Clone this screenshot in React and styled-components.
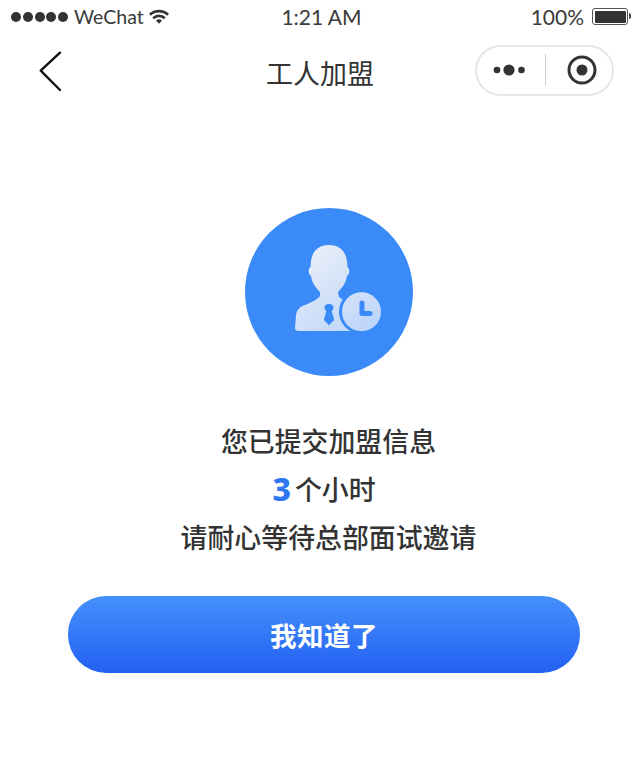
import React from 'react';
import styled, { createGlobalStyle } from 'styled-components';

const GlobalStyle = createGlobalStyle`
  html, body {
    margin: 0;
    padding: 0;
    background: #fff;
  }
  * {
    box-sizing: border-box;
  }
`;

const Page = styled.div`
  width: 640px;
  height: 765px;
  background: #fff;
  color: #333;
  font-family: "Noto Sans CJK SC", "Noto Sans", sans-serif;
  overflow: hidden;
`;

const StatusBar = styled.div`
  height: 33px;
  padding: 0 12px 0 11px;
  display: grid;
  grid-template-columns: 1fr auto 1fr;
  align-items: center;
  font-family: "Lato", "Open Sans", sans-serif;
  font-size: 21px;
  color: #3a3a3a;
`;

const StatusLeft = styled.div`
  display: flex;
  align-items: center;
`;

const Signal = styled.div`
  display: flex;
  gap: 1.75px;
  margin-right: 6px;
`;

const SignalDot = styled.span`
  width: 10px;
  height: 10px;
  border-radius: 50%;
  background: #333;
`;

const Carrier = styled.span`
  font-size: 19.5px;
`;

const Time = styled.div`
  margin-left: 4px;
`;

const StatusRight = styled.div`
  display: flex;
  align-items: center;
  justify-content: flex-end;
  gap: 8px;
`;

const Battery = styled.div`
  width: 36px;
  height: 17px;
  border: 1px solid #555;
  border-radius: 3px;
  padding: 1.5px;
  position: relative;

  &::before {
    content: '';
    display: block;
    height: 100%;
    background: #333;
    border-radius: 1px;
  }

  &::after {
    content: '';
    position: absolute;
    right: -4px;
    top: 4px;
    width: 2px;
    height: 6px;
    background: #444;
    border-radius: 0 2px 2px 0;
  }
`;

const NavBar = styled.div`
  height: 74px;
  padding: 0 26px;
  display: grid;
  grid-template-columns: 1fr auto 1fr;
  align-items: center;
`;

const BackButton = styled.div`
  margin: 2px 0 0 13px;
`;

const Title = styled.div`
  margin-top: 4px;
  font-size: 27px;
  font-weight: 400;
  color: #333;
`;

const Capsule = styled.div`
  justify-self: end;
  width: 139px;
  height: 51px;
  border: 2px solid #e6e6e6;
  border-radius: 26px;
  display: flex;
  align-items: center;
  justify-content: space-between;
  padding: 0 15.5px 0 15px;
`;

const CapsuleDivider = styled.span`
  width: 1.5px;
  height: 32px;
  margin-right: 2px;
  background: #ccc;
`;

const Main = styled.main`
  display: flex;
  flex-direction: column;
  align-items: center;
  padding: 101px 0 0 8px;
`;

const Avatar = styled.div`
  width: 168px;
  height: 168px;
  margin-left: 10px;
  border-radius: 50%;
  background: #3a8bf8;
  display: flex;
  align-items: center;
  justify-content: center;
`;

const Message = styled.div`
  margin-top: 43px;
  display: flex;
  flex-direction: column;
  align-items: center;
  gap: 5px;
`;

const Line = styled.div`
  height: 43px;
  margin-left: ${props => (props.$shifted ? '9px' : '0')};
  font-size: 26.9px;
  font-weight: 500;
  color: #333;
  display: flex;
  align-items: center;
`;

const Count = styled.span`
  font-family: "Noto Sans", sans-serif;
  font-size: 32px;
  font-weight: 800;
  color: #2f76f0;
  margin-right: 4px;
`;

const ConfirmButton = styled.button`
  margin-top: 38px;
  width: 512px;
  height: 77px;
  border: none;
  border-radius: 38px;
  background: linear-gradient(180deg, #4590fb 0%, #2360f3 100%);
  color: #fff;
  font-family: inherit;
  font-size: 26.5px;
  font-weight: 700;
  letter-spacing: 0.5px;
`;

const WifiIcon = () => (
  <svg width="20" height="16" viewBox="0 0 22 17" style={{ marginLeft: 5 }}>
    <path d="M1 6a14.500 14.500 0 0 1 20 0" fill="none" stroke="#333" strokeWidth="3" />
    <path d="M4.600 9.800a9.300 9.300 0 0 1 12.800 0" fill="none" stroke="#333" strokeWidth="3" />
    <path d="M7.700 12.400a5 5 0 0 1 6.600 0L11 16z" fill="#333" />
  </svg>
);

const BackIcon = () => (
  <svg width="24" height="42" viewBox="0 0 24 42" style={{ display: 'block' }}>
    <path d="M21 2.700 1.700 20.700 21 40" fill="none" stroke="#111" strokeWidth="2.400" strokeLinecap="round" strokeLinejoin="round" />
  </svg>
);

const MoreIcon = () => (
  <svg width="34" height="14" viewBox="0 0 34 14">
    <circle cx="5" cy="7" r="3.300" fill="#333" />
    <circle cx="17" cy="7" r="5.600" fill="#333" />
    <circle cx="29.500" cy="7" r="3.300" fill="#333" />
  </svg>
);

const RecordIcon = () => (
  <svg width="30" height="30" viewBox="0 0 30 30">
    <circle cx="15" cy="15" r="13" fill="none" stroke="#333" strokeWidth="3" />
    <circle cx="15" cy="15" r="5.500" fill="#333" />
  </svg>
);

const WorkerIcon = () => (
  <svg width="88" height="88" viewBox="0 0 88 88" style={{ marginLeft: 18, marginBottom: 6 }}>
    <defs>
      <linearGradient id="workerFill" x1="0.25" y1="0" x2="0.75" y2="1">
        <stop offset="0" stopColor="#eaeff8" />
        <stop offset="1" stopColor="#c3d9f9" />
      </linearGradient>
      <linearGradient id="clockFill" x1="0.2" y1="0" x2="0.8" y2="1">
        <stop offset="0" stopColor="#d3e2f8" />
        <stop offset="1" stopColor="#b9d3f9" />
      </linearGradient>
    </defs>
    <path
      d="M35 0C24 0 18 7 17 16L16.500 22C14 24 14 29 17 31C18 38 22 43 26 47L26 51C24 54 18 57 11 60C5 62 3 65 2 70L1 83C1 85 2 86 5 86H62V60C57 58 48 55 45 52L44 47C48 43 52 38 53 31C56 29 56 24 53.500 22L53 16C52 7 46 0 35 0z"
      fill="url(#workerFill)"
    />
    <path d="M35 59c3 0 4.500 1.600 4.500 3.600 0 1.500-.8 2.600-1.700 3.600l2.400 8.800-5.200 5.200-5.200-5.200 2.400-8.800c-.9-1-1.700-2.100-1.700-3.600 0-2 1.500-3.600 4.500-3.600z" fill="#3a8bf8" />
    <circle cx="67.500" cy="66.700" r="22.500" fill="#3a8bf8" />
    <circle cx="67.500" cy="66.700" r="19.500" fill="url(#clockFill)" />
    <path d="M68 58v10.500h8" fill="none" stroke="#3a8bf8" strokeWidth="5" strokeLinecap="round" strokeLinejoin="round" />
  </svg>
);

const App = () => (
  <Page>
    <GlobalStyle />
    <StatusBar>
      <StatusLeft>
        <Signal>
          {[0, 1, 2, 3, 4].map(i => (
            <SignalDot key={i} />
          ))}
        </Signal>
        <Carrier>WeChat</Carrier>
        <WifiIcon />
      </StatusLeft>
      <Time>1:21 AM</Time>
      <StatusRight>
        100%
        <Battery />
      </StatusRight>
    </StatusBar>
    <NavBar>
      <BackButton>
        <BackIcon />
      </BackButton>
      <Title>工人加盟</Title>
      <Capsule>
        <MoreIcon />
        <CapsuleDivider />
        <RecordIcon />
      </Capsule>
    </NavBar>
    <Main>
      <Avatar>
        <WorkerIcon />
      </Avatar>
      <Message>
        <Line $shifted>您已提交加盟信息</Line>
        <Line>
          <Count>3</Count>个小时
        </Line>
        <Line $shifted>请耐心等待总部面试邀请</Line>
      </Message>
      <ConfirmButton>我知道了</ConfirmButton>
    </Main>
  </Page>
);

export default App;
